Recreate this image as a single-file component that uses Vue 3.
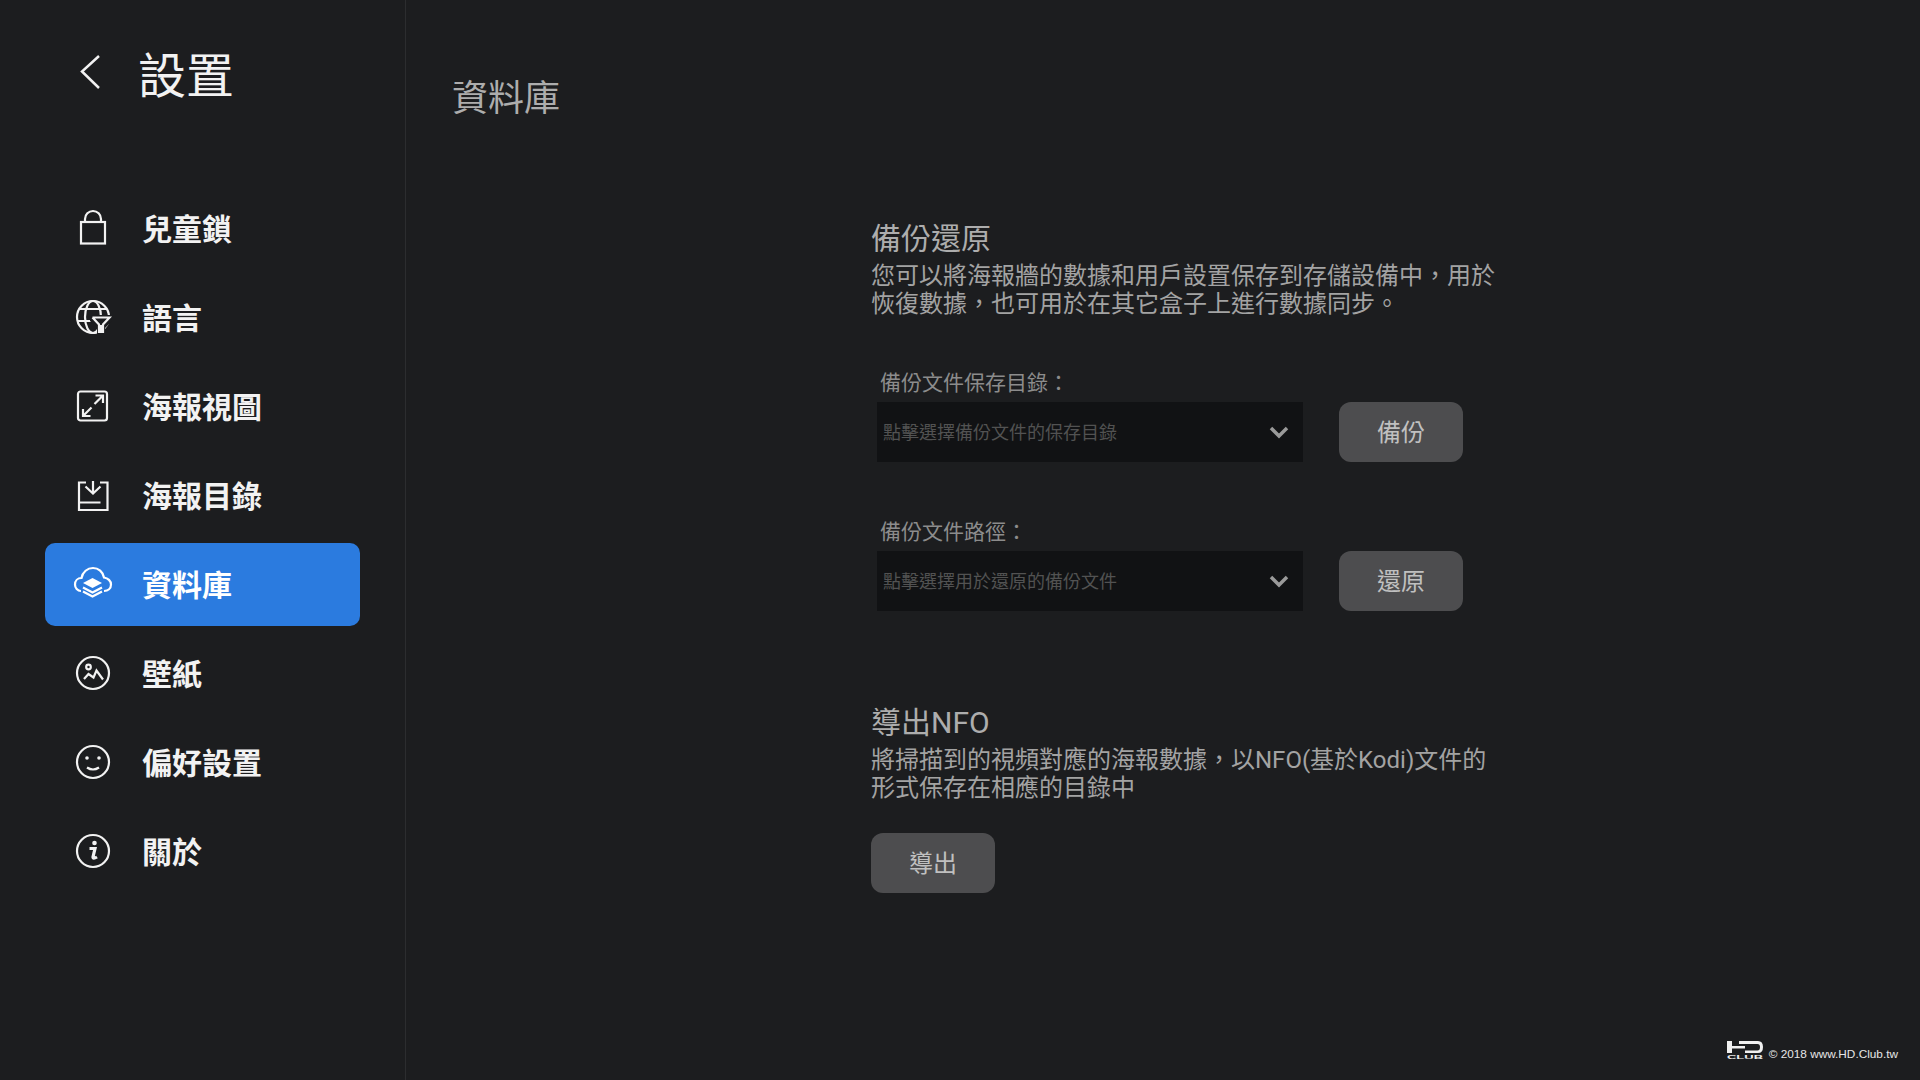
<template>
  <div class="screen">
    <aside class="sidebar">
      <header class="side-head">
        <svg class="back" viewBox="0 0 24 40" width="24" height="40">
          <polyline points="21,4 4,19.500 21,36" />
        </svg>
        <span class="side-title">設置</span>
      </header>

      <nav class="menu">
        <div
          v-for="item in menu"
          :key="item.id"
          class="menu-item"
          :class="{ active: item.id === 'library' }">
          <svg class="menu-icon" viewBox="0 0 40 40" width="40" height="40">
            <template v-if="item.id === 'lock'">
              <rect x="8" y="14" width="24" height="21.500" />
              <path d="M12 14V11a8 8 0 0 1 16 0V14" />
            </template>
            <template v-else-if="item.id === 'lang'">
              <circle cx="20" cy="20" r="16" />
              <ellipse cx="20" cy="20" rx="8" ry="16" />
              <path d="M6 12H34M4.500 24H34" />
              <path class="erase" d="M17 18H39V24L32 31V38H24V31L17 24Z" />
              <path d="M19.500 20.500H36.500L30 27.500V36M26 36V27.500L19.500 20.500" />
              <path d="M28 28V36" />
            </template>
            <template v-else-if="item.id === 'poster'">
              <rect x="5" y="5.500" width="29" height="29" rx="2.500" />
              <path d="M30 9.500L21.500 18M22.500 9.500H30V17M10 30L18.500 21.500M10 23V30H17.500" />
            </template>
            <template v-else-if="item.id === 'folder'">
              <path d="M13 7.500H6V35H34.500V7.500H27" />
              <path d="M20 6V18M12.500 11.500L20 18.500L27.500 11.500M7 27.500H27.500" />
            </template>
            <template v-else-if="item.id === 'library'">
              <path d="M8 27C4.500 27 2 24 2 20.500C2 17 4.500 14 8.500 14C9.500 8 14.500 4 20 4C25.500 4 30 8 31 13.500C35 14 38 17 38 20.500C38 24.500 35 27 31 27" />
              <path class="solid" d="M19.500 14L29 19L19.500 24L10 19Z" />
              <path d="M10 23.500L19.500 28.500L29 23.500M10 27.500L19.500 32.500L29 27.500" />
            </template>
            <template v-else-if="item.id === 'wallpaper'">
              <circle cx="20" cy="20" r="16" />
              <circle cx="15.500" cy="14" r="2.300" />
              <path d="M11 26L15.500 21L20.500 24.500L23.500 17.500L30 26.500" />
            </template>
            <template v-else-if="item.id === 'prefs'">
              <circle cx="20" cy="20" r="16" />
              <circle class="solid" cx="14" cy="16" r="1.800" />
              <circle class="solid" cx="26" cy="16" r="1.800" />
              <path d="M14 25.500Q20 29.500 26 25.500" />
            </template>
            <template v-else>
              <circle cx="20" cy="20" r="16" />
              <circle class="solid" cx="21.500" cy="12" r="2.300" />
              <path class="thick" d="M16.500 17.500H22L20 26Q19.800 28.500 24 26" />
            </template>
          </svg>
          <span class="menu-label">{{ item.label }}</span>
        </div>
      </nav>
    </aside>

    <main class="content">
      <h1 class="page-title">資料庫</h1>

      <div class="panel">
        <section class="backup">
          <h2 class="section-title">備份還原</h2>
          <p class="section-text">您可以將海報牆的數據和用戶設置保存到存儲設備中，用於恢復數據，也可用於在其它盒子上進行數據同步。</p>

          <div v-for="field in fields" :key="field.label" class="field">
            <div class="field-label">{{ field.label }}</div>
            <div class="field-row">
              <div class="select">
                <span class="placeholder">{{ field.placeholder }}</span>
                <svg class="chevron" viewBox="0 0 20 14" width="20" height="14">
                  <polyline points="2,3 10,11 18,3" />
                </svg>
              </div>
              <button class="btn"><span class="btn-text">{{ field.action }}</span></button>
            </div>
          </div>
        </section>

        <section class="export">
          <h2 class="section-title">導出NFO</h2>
          <p class="section-text">將掃描到的視頻對應的海報數據，以NFO(基於Kodi)文件的形式保存在相應的目錄中</p>
          <button class="btn export-btn"><span class="btn-text">導出</span></button>
        </section>
      </div>
    </main>

    <div class="watermark">
      <svg class="wm-logo" viewBox="0 0 36 18" width="36" height="18">
        <path d="M0 0H5V5H18V7.500H5V12H0Z" />
        <path d="M12 0H31Q36 0 36 6Q36 12 31 12H18V9.500H30.500Q33 9.500 33 6Q33 3 30.500 3H12Z" />
        <text x="0" y="18" textLength="36" lengthAdjust="spacingAndGlyphs">CLUB</text>
      </svg>
      <span class="wm-text">© 2018 www.HD.Club.tw</span>
    </div>
  </div>
</template>

<script setup>
const menu = [
  { id: 'lock', label: '兒童鎖' },
  { id: 'lang', label: '語言' },
  { id: 'poster', label: '海報視圖' },
  { id: 'folder', label: '海報目錄' },
  { id: 'library', label: '資料庫' },
  { id: 'wallpaper', label: '壁紙' },
  { id: 'prefs', label: '偏好設置' },
  { id: 'about', label: '關於' }
];

const fields = [
  { label: '備份文件保存目錄：', placeholder: '點擊選擇備份文件的保存目錄', action: '備份' },
  { label: '備份文件路徑：', placeholder: '點擊選擇用於還原的備份文件', action: '還原' }
];
</script>

<style>
html,
body {
  margin: 0;
  background: #1c1d1f;
}
</style>

<style scoped>
.screen {
  position: relative;
  display: flex;
  width: 1920px;
  height: 1080px;
  overflow: hidden;
  background: #1c1d1f;
  font-family: Roboto, "Noto Sans CJK TC", sans-serif;
}

.sidebar {
  flex: none;
  box-sizing: border-box;
  width: 406px;
  border-right: 1px solid #2c2d2f;
  padding: 50px 0 0 45px;
}

.side-head {
  display: flex;
  align-items: center;
  height: 44px;
  margin-bottom: 93px;
  padding: 0 0 0 33px;
}

.back {
  fill: none;
  stroke: #f2f2f2;
  stroke-width: 2.500;
}

.side-title {
  margin: 9px 0 0 36px;
  font-size: 48px;
  line-height: 44px;
  color: #f2f2f2;
}

.menu {
  display: flex;
  flex-direction: column;
  gap: 6px;
  width: 315px;
}

.menu-item {
  display: flex;
  align-items: center;
  height: 83px;
  padding-left: 28px;
  border-radius: 10px;
  color: #f2f2f2;
}

.menu-item.active {
  background: #2b7bdf;
  color: #fff;
}

.menu-icon {
  flex: none;
  margin-bottom: 2px;
  fill: none;
  stroke: currentColor;
  stroke-width: 2.200;
}

.menu-icon .solid {
  fill: currentColor;
  stroke: none;
}

.menu-icon .thick {
  stroke-width: 3.200;
}

.menu-icon .erase {
  fill: #1c1d1f;
  stroke: none;
}

.menu-label {
  margin: 0 0 4px 29px;
  font-size: 30px;
  font-weight: 700;
}

.content {
  flex: 1;
  padding: 73px 0 0 46px;
}

.page-title {
  margin: 0 0 94px;
  font-size: 36px;
  font-weight: 400;
  line-height: 52px;
  color: #adadad;
}

.panel {
  width: 640px;
  margin-left: 419px;
}

.section-title {
  margin: 0;
  font-size: 30px;
  font-weight: 400;
  line-height: 40px;
  color: #adadad;
}

.section-text {
  width: 630px;
  margin: 3px 0 0;
  font-size: 24px;
  line-height: 28px;
  color: #a3a3a3;
}

.field {
  margin: 0 0 55px 6px;
}

.backup .section-text {
  margin-bottom: 50px;
}

.field-label {
  height: 30px;
  margin-bottom: 4px;
  padding-left: 3px;
  font-size: 21px;
  line-height: 30px;
  color: #8c8c8c;
}

.field-row {
  display: flex;
  align-items: center;
  gap: 36px;
}

.select {
  display: flex;
  align-items: center;
  justify-content: space-between;
  box-sizing: border-box;
  width: 426px;
  height: 60px;
  padding: 0 14px 0 6px;
  background: #111214;
}

.placeholder {
  margin-bottom: 2px;
  font-size: 18px;
  color: #525252;
}

.chevron {
  fill: none;
  stroke: #9a9a9a;
  stroke-width: 3.500;
}

.btn {
  width: 124px;
  height: 60px;
  padding: 0;
  border: none;
  border-radius: 12px;
  background: #4d4d4f;
  font-family: inherit;
  font-size: 24px;
  color: #c0c0c0;
}

.btn-text {
  display: block;
  margin-top: -3px;
}

.export {
  margin-top: 92px;
}

.export-btn {
  display: block;
  margin-top: 31px;
}

.watermark {
  position: absolute;
  right: 22px;
  bottom: 19px;
  display: flex;
  align-items: flex-start;
  gap: 6px;
  font-family: "Liberation Sans", Arial, sans-serif;
  font-size: 11.800px;
  color: #e6e6e6;
}

.wm-text {
  margin-top: 6px;
}

.wm-logo {
  overflow: visible;
  fill: #f0f0f0;
}

.wm-logo text {
  font-size: 6px;
  font-weight: 700;
}
</style>
